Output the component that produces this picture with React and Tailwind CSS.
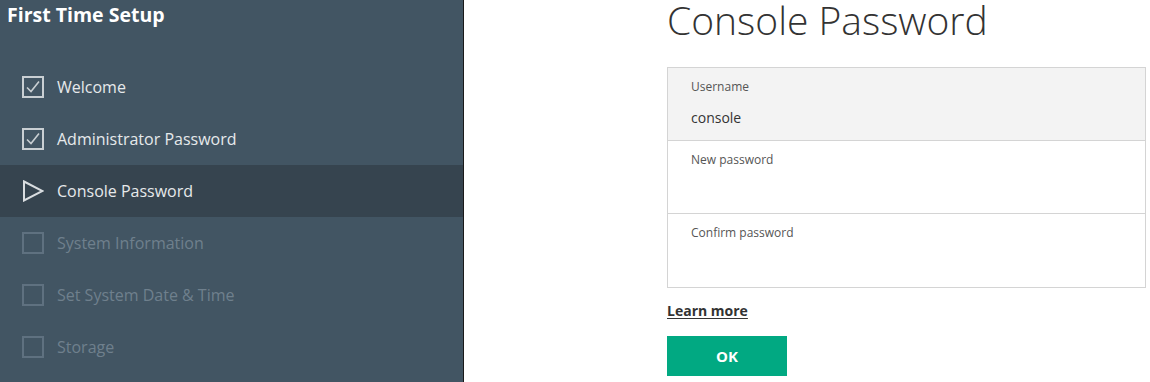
import React from "react";

const steps = [
  { label: "Welcome", state: "done" },
  { label: "Administrator Password", state: "done" },
  { label: "Console Password", state: "active" },
  { label: "System Information", state: "todo" },
  { label: "Set System Date & Time", state: "todo" },
  { label: "Storage", state: "todo" },
];

function StepIcon({ state }) {
  if (state === "active") {
    return (
      <svg width="22" height="22" viewBox="0 0 22 22" className="shrink-0">
        <path d="M2 1.5 L20.5 11 L2 20.5 Z" fill="none" stroke="#d9dde0" strokeWidth="2" strokeLinejoin="miter" />
      </svg>
    );
  }
  const stroke = state === "done" ? "#c9cfd3" : "#5f7180";
  return (
    <svg width="22" height="22" viewBox="0 0 22 22" className="shrink-0">
      <rect x="1" y="1" width="20" height="20" fill="none" stroke={stroke} strokeWidth="2" />
      {state === "done" && (
        <path d="M5 11.5 L9 15.5 L17 5.5" fill="none" stroke="#c9cfd3" strokeWidth="1.6" />
      )}
    </svg>
  );
}

function Field({ label, value, filled }) {
  return (
    <div className={`h-[73px] pl-[23px] pr-6 pt-[12px] ${filled ? "bg-[#f3f3f3]" : "bg-white"}`}>
      <div className="text-[12px] leading-[14px] text-[#555]">{label}</div>
      {value && <div className="mt-[15px] text-[14px] leading-[17px] text-[#333]">{value}</div>}
    </div>
  );
}

export default function App() {
  return (
    <div className="flex h-[382px] w-[1150px] overflow-hidden bg-white font-['Open_Sans',sans-serif]">
      <aside className="w-[464px] shrink-0 bg-[#425563] border-r border-[#1a1a1a]">
        <h1 className="px-[7px] pt-[2px] text-[19.5px] font-bold leading-[26px] text-white">First Time Setup</h1>
        <ul className="mt-[33px]">
          {steps.map((s) => (
            <li
              key={s.label}
              className={`flex h-[52px] items-center gap-[13px] pl-[22px] text-[16px] ${
                s.state === "active" ? "bg-[#36444f]" : ""
              } ${s.state === "todo" ? "text-[#6f808d]" : "text-[#e6e9eb]"}`}
            >
              <StepIcon state={s.state} />
              <span>{s.label}</span>
            </li>
          ))}
        </ul>
      </aside>
      <main className="flex-1 pl-[203px] pr-[4px]">
        <h2 className="text-[39px] font-light leading-[40px] text-[#333]">Console Password</h2>
        <div className="mt-[27px] border border-[#d4d4d4] divide-y divide-[#d4d4d4]">
          <Field label="Username" value="console" filled />
          <Field label="New password" />
          <Field label="Confirm password" />
        </div>
        <a className="mt-[13px] inline-block text-[14px] font-bold leading-[20px] text-[#333] underline underline-offset-2">Learn more</a>
        <div className="mt-[14px]">
          <button className="h-[40px] w-[120px] bg-[#01a982] text-[15px] font-bold text-white">OK</button>
        </div>
      </main>
    </div>
  );
}
